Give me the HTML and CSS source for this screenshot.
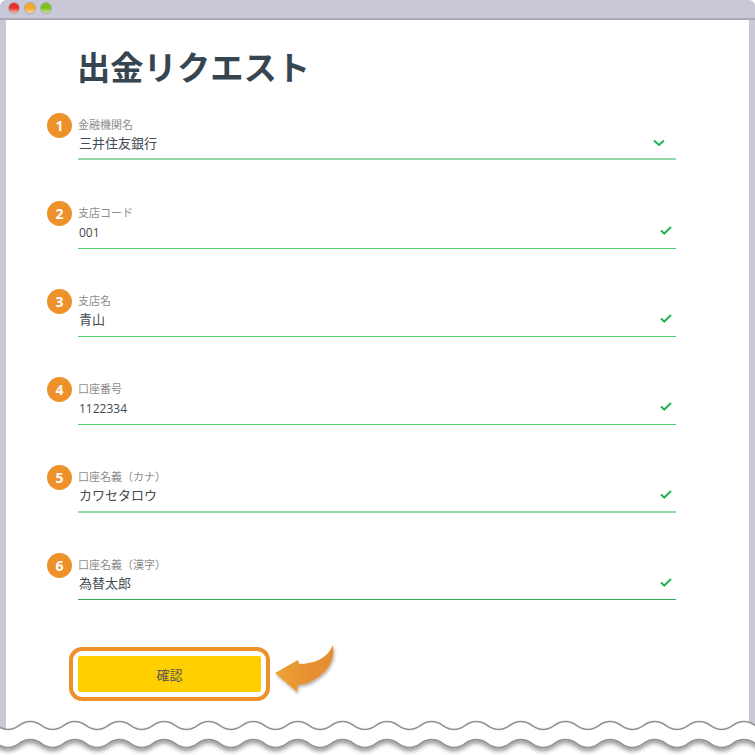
FILE: index.html
```html
<!DOCTYPE html>
<html lang="ja">
<head>
    <meta charset="UTF-8">
    <meta name="viewport" content="width=device-width, initial-scale=1.0">
    <title>出金リクエスト</title>
    <link rel="stylesheet" href="styles.css">
</head>
<body>
    <div class="window">
        <div class="titlebar">
            <span class="light red"></span>
            <span class="light yellow"></span>
            <span class="light green"></span>
        </div>
        <div class="content">
            <h1>出金リクエスト</h1>
            <div class="field">
                <div class="badge">1</div>
                <div class="input light-line short">
                    <div class="label">金融機関名</div>
                    <div class="value">三井住友銀行</div>
                    <svg class="icon chevron" viewBox="0 0 12 8"><path d="M1 1.5 L6 6 L11 1.5" fill="none" stroke="#22b455" stroke-width="2"/></svg>
                </div>
            </div>
            <div class="field">
                <div class="badge">2</div>
                <div class="input">
                    <div class="label">支店コード</div>
                    <div class="value num">001</div>
                    <svg class="icon check" viewBox="0 0 12 9"><path d="M1 4.5 L4.2 7.5 L11 1" fill="none" stroke="#22b455" stroke-width="2"/></svg>
                </div>
            </div>
            <div class="field">
                <div class="badge">3</div>
                <div class="input">
                    <div class="label">支店名</div>
                    <div class="value">青山</div>
                    <svg class="icon check" viewBox="0 0 12 9"><path d="M1 4.5 L4.2 7.5 L11 1" fill="none" stroke="#22b455" stroke-width="2"/></svg>
                </div>
            </div>
            <div class="field">
                <div class="badge">4</div>
                <div class="input">
                    <div class="label">口座番号</div>
                    <div class="value num">1122334</div>
                    <svg class="icon check" viewBox="0 0 12 9"><path d="M1 4.5 L4.2 7.5 L11 1" fill="none" stroke="#22b455" stroke-width="2"/></svg>
                </div>
            </div>
            <div class="field">
                <div class="badge">5</div>
                <div class="input light-line">
                    <div class="label">口座名義（カナ）</div>
                    <div class="value">カワセタロウ</div>
                    <svg class="icon check" viewBox="0 0 12 9"><path d="M1 4.5 L4.2 7.5 L11 1" fill="none" stroke="#22b455" stroke-width="2"/></svg>
                </div>
            </div>
            <div class="field">
                <div class="badge">6</div>
                <div class="input dark-line short">
                    <div class="label">口座名義（漢字）</div>
                    <div class="value">為替太郎</div>
                    <svg class="icon check" viewBox="0 0 12 9"><path d="M1 4.5 L4.2 7.5 L11 1" fill="none" stroke="#22b455" stroke-width="2"/></svg>
                </div>
            </div>
            <div class="actions">
                <div class="button-ring">
                    <button class="confirm">確認</button>
                </div>
                <svg class="arrow" width="64" height="54" viewBox="0 0 64 54">
                    <defs>
                        <linearGradient id="arrowFill" x1="0" y1="0" x2="1" y2="0">
                            <stop offset="0" stop-color="#eba535"/>
                            <stop offset="0.6" stop-color="#e68f30"/>
                        </linearGradient>
                        <filter id="arrowShadow" x="-20%" y="-20%" width="140%" height="140%">
                            <feDropShadow dx="1" dy="2" stdDeviation="1.5" flood-color="#000" flood-opacity="0.3"/>
                        </filter>
                    </defs>
                    <path d="M1 29 L24 16 L25 20 C40 20 54 14 59 1 C61 14 56 24 47 31 C40 37 32 41 24 41 L23 48 Z" fill="url(#arrowFill)" filter="url(#arrowShadow)"/>
                </svg>
            </div>
        </div>
        <svg class="tear" width="755" height="38" viewBox="0 0 755 38">
            <defs>
                <filter id="tearShadow" filterUnits="userSpaceOnUse" x="-10" y="-5" width="775" height="50">
                    <feDropShadow dx="0" dy="3" stdDeviation="2" flood-color="#000" flood-opacity="0.4"/>
                </filter>
            </defs>
            <g filter="url(#tearShadow)">
                <path fill="#fff" d="M-36.6 9 c11 0 11-8 22.3-8 s11.3 8 22.3 8 c11 0 11-8 22.3-8 s11.3 8 22.3 8 c11 0 11-8 22.3-8 s11.3 8 22.3 8 c11 0 11-8 22.3-8 s11.3 8 22.3 8 c11 0 11-8 22.3-8 s11.3 8 22.3 8 c11 0 11-8 22.3-8 s11.3 8 22.3 8 c11 0 11-8 22.3-8 s11.3 8 22.3 8 c11 0 11-8 22.3-8 s11.3 8 22.3 8 c11 0 11-8 22.3-8 s11.3 8 22.3 8 c11 0 11-8 22.3-8 s11.3 8 22.3 8 c11 0 11-8 22.3-8 s11.3 8 22.3 8 c11 0 11-8 22.3-8 s11.3 8 22.3 8 c11 0 11-8 22.3-8 s11.3 8 22.3 8 c11 0 11-8 22.3-8 s11.3 8 22.3 8 c11 0 11-8 22.3-8 s11.3 8 22.3 8 c11 0 11-8 22.3-8 s11.3 8 22.3 8 c11 0 11-8 22.3-8 s11.3 8 22.3 8 c11 0 11-8 22.3-8 s11.3 8 22.3 8 L766.2 27 c-11 0-11-8-22.3-8 s-11.3 8-22.3 8 c-11 0-11-8-22.3-8 s-11.3 8-22.3 8 c-11 0-11-8-22.3-8 s-11.3 8-22.3 8 c-11 0-11-8-22.3-8 s-11.3 8-22.3 8 c-11 0-11-8-22.3-8 s-11.3 8-22.3 8 c-11 0-11-8-22.3-8 s-11.3 8-22.3 8 c-11 0-11-8-22.3-8 s-11.3 8-22.3 8 c-11 0-11-8-22.3-8 s-11.3 8-22.3 8 c-11 0-11-8-22.3-8 s-11.3 8-22.3 8 c-11 0-11-8-22.3-8 s-11.3 8-22.3 8 c-11 0-11-8-22.3-8 s-11.3 8-22.3 8 c-11 0-11-8-22.3-8 s-11.3 8-22.3 8 c-11 0-11-8-22.3-8 s-11.3 8-22.3 8 c-11 0-11-8-22.3-8 s-11.3 8-22.3 8 c-11 0-11-8-22.3-8 s-11.3 8-22.3 8 c-11 0-11-8-22.3-8 s-11.3 8-22.3 8 c-11 0-11-8-22.3-8 s-11.3 8-22.3 8 c-11 0-11-8-22.3-8 s-11.3 8-22.3 8 Z"/>
                <path id="wave" class="wave" d="M-36.6 9 c11 0 11-8 22.3-8 s11.3 8 22.3 8 c11 0 11-8 22.3-8 s11.3 8 22.3 8 c11 0 11-8 22.3-8 s11.3 8 22.3 8 c11 0 11-8 22.3-8 s11.3 8 22.3 8 c11 0 11-8 22.3-8 s11.3 8 22.3 8 c11 0 11-8 22.3-8 s11.3 8 22.3 8 c11 0 11-8 22.3-8 s11.3 8 22.3 8 c11 0 11-8 22.3-8 s11.3 8 22.3 8 c11 0 11-8 22.3-8 s11.3 8 22.3 8 c11 0 11-8 22.3-8 s11.3 8 22.3 8 c11 0 11-8 22.3-8 s11.3 8 22.3 8 c11 0 11-8 22.3-8 s11.3 8 22.3 8 c11 0 11-8 22.3-8 s11.3 8 22.3 8 c11 0 11-8 22.3-8 s11.3 8 22.3 8 c11 0 11-8 22.3-8 s11.3 8 22.3 8 c11 0 11-8 22.3-8 s11.3 8 22.3 8 c11 0 11-8 22.3-8 s11.3 8 22.3 8 c11 0 11-8 22.3-8 s11.3 8 22.3 8"/>
                <use href="#wave" y="18"/>
            </g>
        </svg>
    </div>
</body>
</html>
```

FILE: styles.css
```css
* {
    box-sizing: border-box;
}

html, body {
    height: 100%;
}

body {
    margin: 0;
    background-color: #fff;
    font-family: "Open Sans", "Noto Sans CJK JP", sans-serif;
    overflow: hidden;
}

.window {
    position: relative;
    height: 730px;
    background-color: #c8c8d6;
    border-radius: 6px 6px 0 0;
    padding: 0 6px;
}

.titlebar {
    display: flex;
    align-items: center;
    gap: 4px;
    height: 20px;
    padding: 0 2px 2px 8px;
    border-bottom: 2px solid #a9a9bb;
    margin: 0 -6px;
}

.light {
    width: 12px;
    height: 12px;
    border-radius: 50%;
    border: 1px solid #aaa;
}

.red {
    background: linear-gradient(#e83030 50%, #f7b9a8);
}

.yellow {
    background: linear-gradient(#f5a623 50%, #fbdc9c);
}

.green {
    background: linear-gradient(#7cc11c 50%, #cfe8a0);
}

.content {
    height: 710px;
    background-color: #fff;
    padding: 26px 73px 0 41px;
}

h1 {
    margin: 0 0 23px 30px;
    font-size: 33.3px;
    line-height: 43px;
    font-weight: 700;
    color: #36454f;
}

.field {
    display: flex;
    gap: 6px;
    height: 88px;
}

.badge {
    flex: none;
    width: 25px;
    height: 25px;
    margin-top: 1px;
    border-radius: 50%;
    background-color: #ee912b;
    color: #fff;
    font-size: 14px;
    font-weight: 700;
    line-height: 25px;
    text-align: center;
}

.input {
    position: relative;
    flex: 1;
    height: 49px;
    padding-top: 6px;
    border-bottom: 1px solid #4fcf6e;
}

.short {
    height: 48px;
}

.light-line {
    border-bottom: 2px solid #93d9a8;
}

.dark-line {
    border-bottom-color: #35a852;
}

.label {
    font-size: 11px;
    line-height: 14px;
    color: #8c8c8c;
}

.value {
    margin-top: 1px;
    padding-left: 1px;
    font-size: 13px;
    line-height: 20px;
    color: #444b52;
}

.num {
    margin-top: 3px;
    font-size: 12px;
}

.icon {
    position: absolute;
}

.chevron {
    right: 11px;
    top: 27px;
    width: 12px;
    height: 8px;
}

.check {
    right: 4px;
    top: 26px;
    width: 12px;
    height: 9px;
}

.actions {
    display: flex;
    align-items: flex-start;
    gap: 4px;
    margin: 7px 0 0 22px;
}

.button-ring {
    padding: 5px;
    border: 4px solid #ee912b;
    border-radius: 13px;
    background-color: #fff;
}

.confirm {
    display: block;
    width: 183px;
    height: 36px;
    border: none;
    border-radius: 2px;
    background-color: #ffcf00;
    font-family: inherit;
    font-size: 13px;
    color: #555;
}

.arrow {
    margin-top: -3px;
}

.tear {
    position: absolute;
    left: 0;
    top: 717px;
    height: 45px;
    overflow: visible;
}

.wave {
    fill: none;
    stroke: #909090;
    stroke-width: 1.5;
}
```
